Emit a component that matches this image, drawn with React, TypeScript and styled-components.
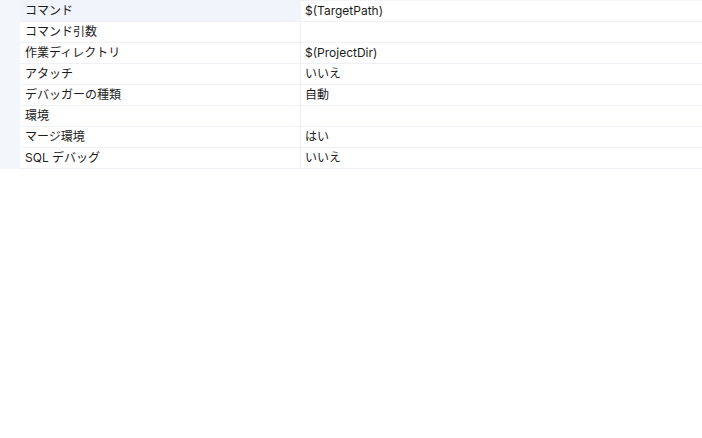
import React from "react";
import styled, { createGlobalStyle } from "styled-components";

const Global = createGlobalStyle`
  html, body { margin: 0; padding: 0; background: #ffffff; }
  body { font-family: Inter, "Noto Sans CJK JP", sans-serif; }
`;

const Grid = styled.div`
  display: flex;
  width: 702px;
`;

const Gutter = styled.div`
  width: 20px;
  background: #f3f6fb;
`;

const Table = styled.div`
  flex: 1;
  display: flex;
  flex-direction: column;
  border-top: 1px solid #f2f4f8;
`;

const Row = styled.div`
  display: grid;
  grid-template-columns: 281px 1fr;
  height: 20px;
  border-bottom: 1px solid #eef1f6;
`;

const Cell = styled.div<{ $selected?: boolean; $name?: boolean }>`
  display: flex;
  align-items: center;
  padding-left: ${(p) => (p.$name ? "5px" : "4px")};
  background: ${(p) => (p.$selected ? "#f1f5fb" : "#ffffff")};
  border-right: ${(p) => (p.$name ? "1px solid #f0f2f6" : "none")};
  font-size: 12px;
  color: #1b1b1b;
  white-space: nowrap;
  line-height: 20px;
`;

const rows: [string, string][] = [
  ["コマンド", "$(TargetPath)"],
  ["コマンド引数", ""],
  ["作業ディレクトリ", "$(ProjectDir)"],
  ["アタッチ", "いいえ"],
  ["デバッガーの種類", "自動"],
  ["環境", ""],
  ["マージ環境", "はい"],
  ["SQL デバッグ", "いいえ"],
];

export default function App() {
  return (
    <>
      <Global />
      <Grid>
        <Gutter />
        <Table>
          {rows.map(([k, v], i) => (
            <Row key={k}>
              <Cell $name $selected={i === 0}>{k}</Cell>
              <Cell>{v}</Cell>
            </Row>
          ))}
        </Table>
      </Grid>
    </>
  );
}
